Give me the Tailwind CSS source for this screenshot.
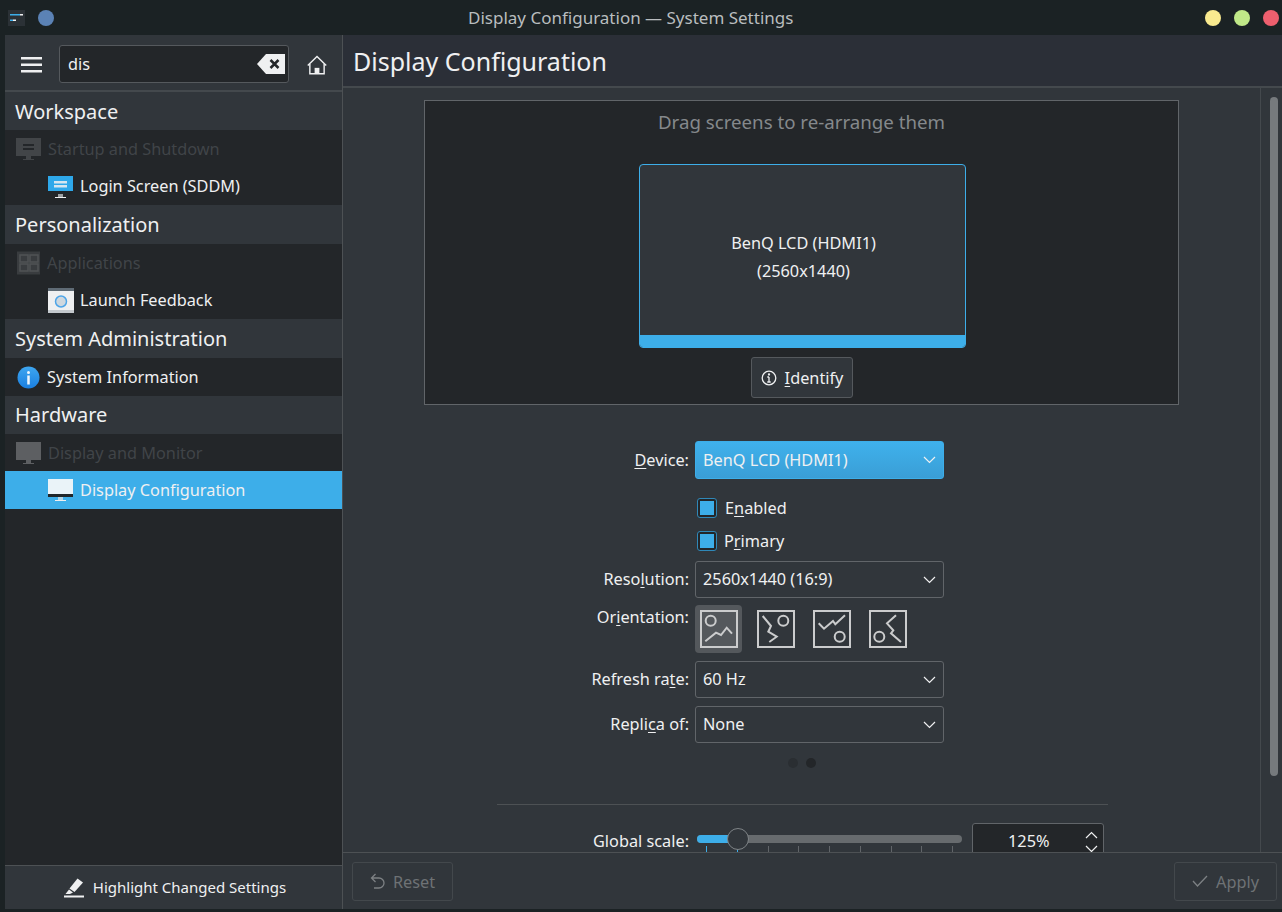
<!DOCTYPE html>
<html lang="en">
<head>
    <meta charset="UTF-8">
    <title>Display Configuration — System Settings</title>
    <script src="https://cdn.jsdelivr.net/npm/@tailwindcss/browser@4"></script>
</head>
<body class="bg-[#1b2224]">
    <div class="w-[1282px] h-[912px] overflow-hidden flex flex-col font-['Noto_Sans',sans-serif] text-[16.3px] text-[#eff0f1]">

        <!-- title bar -->
        <div class="h-[35px] shrink-0 flex items-center bg-[#1b2224]">
            <div class="w-[468px] shrink-0 flex items-center pl-[8px]">
                <svg width="17" height="16" viewBox="0 0 17 16">
                    <rect width="17" height="16" fill="#2b3136"/>
                    <rect x="2" y="4" width="10" height="1.5" fill="#3daee9"/>
                    <rect x="12" y="4" width="3" height="1.5" fill="#eff0f1"/>
                    <rect x="2" y="9.500" width="3" height="1.500" fill="#3daee9"/>
                    <rect x="5" y="9.500" width="3" height="1.500" fill="#eff0f1"/>
                </svg>
                <div class="w-[16px] h-[16px] ml-[13px] rounded-full bg-[#5b82b5]"></div>
            </div>
            <div class="text-[17px] text-[#b9bdbf] whitespace-nowrap">Display Configuration — System Settings</div>
            <div class="ml-auto flex items-center gap-[13px] pr-[3px]">
                <div class="w-[16px] h-[16px] rounded-full bg-[#f9ea8f]"></div>
                <div class="w-[16px] h-[16px] rounded-full bg-[#c0e888]"></div>
                <div class="w-[16px] h-[16px] rounded-full bg-[#ee5f6e]"></div>
            </div>
        </div>

        <div class="flex-1 flex ml-[5px] mb-[3px] min-h-0">

            <!-- sidebar -->
            <div class="w-[338px] shrink-0 flex flex-col border-r border-[#4d5154] bg-[#232629]">
                <div class="h-[57px] shrink-0 flex items-center bg-[#31363b] border-b-2 border-[#44494d]">
                    <svg class="ml-[16px] mt-[4px]" width="21" height="16" viewBox="0 0 21 16" fill="#eff0f1">
                        <rect y="0" width="21" height="2.500"/>
                        <rect y="6.500" width="21" height="2.500"/>
                        <rect y="13" width="21" height="2.500"/>
                    </svg>
                    <div class="ml-[17px] mt-[3px] w-[230px] h-[38px] flex items-center justify-between pl-[8px] pr-[3px] bg-[#232629] border border-[#55595d] rounded-[3px]">
                        <span class="pt-[1px]">dis</span>
                        <svg width="28" height="20" viewBox="0 0 28 20">
                            <path d="M0 10 L9 0 H28 V20 H9 Z" fill="#eff0f1"/>
                            <path d="M13.500 6 L21.500 14 M21.500 6 L13.500 14" stroke="#232629" stroke-width="2.500"/>
                        </svg>
                    </div>
                    <svg class="ml-[18px] mt-[4px]" width="20" height="20" viewBox="0 0 21 20" fill="none" stroke="#eff0f1" stroke-width="1.500">
                        <path d="M0.800 10.500 L10.500 1 L20.200 10.500"/>
                        <path d="M3 9 V19.200 H18 V9"/>
                        <rect x="8" y="13" width="5" height="6" fill="#eff0f1" stroke="none"/>
                    </svg>
                </div>

                <div class="h-[38px] shrink-0 flex items-center pl-[10px] pt-[1px] bg-[#31363b] text-[20px]">Workspace</div>
                <div class="h-[38px] flex items-center pl-[10px]">
                    <svg width="27" height="24" viewBox="0 0 27 24" class="opacity-30">
                        <rect x="1" y="1" width="25" height="18" fill="#8a8d90"/>
                        <rect x="8" y="7" width="11" height="2" fill="#232629"/>
                        <rect x="8" y="11" width="11" height="2" fill="#232629"/>
                        <rect x="11" y="19" width="5" height="3" fill="#8a8d90"/>
                        <rect x="8" y="22" width="11" height="1" fill="#8a8d90"/>
                    </svg>
                    <span class="ml-[6px] text-[#404448]">Startup and Shutdown</span>
                </div>
                <div class="h-[37px] flex items-center pl-[42px]">
                    <svg width="27" height="24" viewBox="0 0 27 24">
                        <rect x="1" y="1" width="25" height="18" fill="#2ea8ea"/>
                        <rect x="1" y="16" width="25" height="3" fill="#20262a"/>
                        <rect x="7" y="6" width="13" height="2.500" fill="#d5e6f0"/>
                        <rect x="7" y="10" width="13" height="2.500" fill="#d5e6f0"/>
                        <rect x="11" y="19" width="5" height="3" fill="#9da1a4"/>
                        <rect x="8" y="22" width="11" height="1" fill="#eff0f1"/>
                    </svg>
                    <span class="ml-[6px] pb-[1px]">Login Screen (SDDM)</span>
                </div>

                <div class="h-[39px] shrink-0 flex items-center pl-[10px] pt-[1px] bg-[#31363b] text-[20px]">Personalization</div>
                <div class="h-[38px] flex items-center pl-[11px]">
                    <svg width="25" height="24" viewBox="0 0 25 24" fill="none" stroke="#505356" stroke-width="1.500">
                        <rect x="1" y="0.500" width="23" height="23" fill="#393c3f" stroke="none"/>
                        <rect x="4" y="4" width="8" height="7"/>
                        <rect x="14" y="4" width="8" height="7"/>
                        <rect x="4" y="13" width="8" height="7"/>
                        <rect x="14" y="13" width="8" height="7"/>
                    </svg>
                    <span class="ml-[6px] text-[#404448]">Applications</span>
                </div>
                <div class="h-[37px] flex items-center pl-[42px]">
                    <svg width="27" height="25" viewBox="0 0 27 25">
                        <rect x="1" y="0" width="26" height="25" fill="#eff0f1"/>
                        <rect x="1" y="0" width="26" height="3" fill="#5f6b75"/>
                        <rect x="1" y="22" width="26" height="3" fill="#c4c9cd"/>
                        <circle cx="14" cy="13.500" r="5.500" fill="#cfd8df" stroke="#4ea5e8" stroke-width="1.500"/>
                    </svg>
                    <span class="ml-[6px] pb-[1px]">Launch Feedback</span>
                </div>

                <div class="h-[39px] shrink-0 flex items-center pl-[10px] pt-[1px] bg-[#31363b] text-[20px]">System Administration</div>
                <div class="h-[38px] flex items-center pl-[12px]">
                    <svg width="23" height="23" viewBox="0 0 23 23">
                        <defs>
                            <linearGradient id="infoBlue" x1="0" y1="0" x2="0" y2="1">
                                <stop offset="0" stop-color="#3ea6f0"/>
                                <stop offset="1" stop-color="#1a7fe0"/>
                            </linearGradient>
                        </defs>
                        <circle cx="11.500" cy="11.500" r="11" fill="url(#infoBlue)"/>
                        <rect x="10.250" y="9.500" width="2.500" height="9" fill="#eff6fc"/>
                        <circle cx="11.500" cy="6.500" r="1.500" fill="#eff6fc"/>
                    </svg>
                    <span class="ml-[7px]">System Information</span>
                </div>

                <div class="h-[38px] shrink-0 flex items-center pl-[10px] bg-[#31363b] text-[20px]">Hardware</div>
                <div class="h-[37px] flex items-center pl-[10px]">
                    <svg width="27" height="24" viewBox="0 0 27 24" class="opacity-40">
                        <rect x="1" y="1" width="25" height="18" fill="#b4b6b8"/>
                        <rect x="11" y="19" width="5" height="3" fill="#b4b6b8"/>
                        <rect x="8" y="22" width="11" height="1" fill="#b4b6b8"/>
                    </svg>
                    <span class="ml-[6px] pt-[1px] text-[#404448]">Display and Monitor</span>
                </div>
                <div class="h-[38px] flex items-center pl-[42px] bg-[#3daee9]">
                    <svg width="27" height="24" viewBox="0 0 27 24">
                        <rect x="1" y="1" width="25" height="18" fill="#eaf3f8"/>
                        <rect x="1" y="16" width="25" height="3" fill="#20262a"/>
                        <rect x="11" y="19" width="5" height="3" fill="#b5d6e8"/>
                        <rect x="8" y="22" width="11" height="1" fill="#eff0f1"/>
                    </svg>
                    <span class="ml-[6px]">Display Configuration</span>
                </div>

                <div class="flex-1"></div>
                <div class="h-[44px] shrink-0 flex items-center justify-center pl-[3px] bg-[#31363b] border-t border-[#4d5154] text-[15px]">
                    <svg width="20" height="20" viewBox="0 0 20 20" fill="#eff0f1">
                        <path d="M13.500 0.500 L19 4.500 L10.500 14 L5.500 10.500 Z"/>
                        <path d="M5 11.500 L9 14.500 L6 16 L1.500 16 Z"/>
                        <rect y="17.500" width="20" height="2"/>
                    </svg>
                    <span class="ml-[9px]">Highlight Changed Settings</span>
                </div>
            </div>

            <!-- main panel -->
            <div class="flex-1 min-w-0 flex flex-col bg-[#31363b]">
                <div class="h-[53px] shrink-0 flex items-center pl-[10px] pt-[2px] bg-[#2b2f37] border-b-2 border-[#44494d] text-[25px]">Display Configuration</div>

                <div class="flex-1 min-h-0 flex">
                    <div class="w-[917px] shrink-0 overflow-hidden">
                        <div class="mt-[12px] ml-[81px] w-[755px] h-[305px] flex flex-col items-center bg-[#232629] border border-[#616569]">
                            <div class="mt-[8px] h-[26px] leading-[26px] text-[18.7px] text-[#85898c]">Drag screens to re-arrange them</div>
                            <div class="mt-[29px] ml-[2px] w-[327px] h-[184px] flex flex-col rounded-[4px] border border-[#3daee9] bg-[#31363b] overflow-hidden">
                                <div class="flex-1 flex flex-col items-center justify-center leading-[28px] pt-[13px] pl-[2px]">
                                    <div>BenQ LCD (HDMI1)</div>
                                    <div>(2560x1440)</div>
                                </div>
                                <div class="h-[12px] bg-[#3daee9]"></div>
                            </div>
                            <div class="mt-[9px] ml-[1px] w-[102px] h-[41px] flex items-center justify-center bg-[#31363b] border border-[#55595d] rounded-[3px]">
                                <svg width="16" height="16" viewBox="0 0 16 16" fill="none" stroke="#eff0f1" stroke-width="1.300">
                                    <circle cx="8" cy="8" r="6.800"/>
                                    <path d="M8 7 V12 M6.300 7 H8 M6.300 12 H9.700"/>
                                    <circle cx="8" cy="4.500" r="0.500" fill="#eff0f1"/>
                                </svg>
                                <span class="ml-[8px] pt-[2px]"><u class="underline-offset-2">I</u>dentify</span>
                            </div>
                        </div>

                        <div class="mt-[36px] h-[38px] flex items-center">
                            <div class="w-[346px] text-right"><u class="underline-offset-2">D</u>evice:</div>
                            <div class="ml-[6px] w-[249px] h-[38px] flex items-center justify-between pl-[7px] pr-[7px] rounded-[3px] border border-[#3daee9] bg-gradient-to-b from-[#3fb1ec] to-[#3a9ed6]">
                                <span>BenQ LCD (HDMI1)</span>
                                <svg width="13" height="8" viewBox="0 0 13 8" fill="none" stroke="#eff0f1" stroke-width="1.200"><path d="M1 1 L6.500 6.500 L12 1"/></svg>
                            </div>
                        </div>

                        <div class="mt-[19px] h-[20px] flex items-center pl-[353.500px]">
                            <div class="w-[20px] h-[20px] flex items-center justify-center rounded-[3px] border border-[#2f88b8] bg-[#232629]"><div class="w-[14px] h-[14px] bg-[#3daee9]"></div></div>
                            <span class="ml-[8.500px]">E<u class="underline-offset-2">n</u>abled</span>
                        </div>
                        <div class="mt-[13px] h-[20px] flex items-center pl-[353.500px]">
                            <div class="w-[20px] h-[20px] flex items-center justify-center rounded-[3px] border border-[#2f88b8] bg-[#232629]"><div class="w-[14px] h-[14px] bg-[#3daee9]"></div></div>
                            <span class="ml-[7.500px]">P<u class="underline-offset-2">r</u>imary</span>
                        </div>

                        <div class="mt-[10px] h-[37px] flex items-center">
                            <div class="w-[346px] text-right pb-[1px]">Reso<u class="underline-offset-2">l</u>ution:</div>
                            <div class="ml-[6px] w-[249px] h-[37px] flex items-center justify-between pl-[7px] pr-[7px] rounded-[3px] border border-[#616569]">
                                <span class="pb-[1px]">2560x1440 (16:9)</span>
                                <svg width="13" height="8" viewBox="0 0 13 8" fill="none" stroke="#eff0f1" stroke-width="1.200"><path d="M1 1 L6.500 6.500 L12 1"/></svg>
                            </div>
                        </div>

                        <div class="mt-[7px] h-[48px] flex items-start">
                            <div class="w-[346px] text-right leading-[24px]">Or<u class="underline-offset-2">i</u>entation:</div>
                            <div class="ml-[6px] w-[47px] h-[48px] flex items-center justify-center pl-[1px] rounded-[4px] bg-[#54585c]">
                                <svg width="38" height="38" viewBox="0 0 38 38" fill="none" stroke="#cbcccd" stroke-width="2">
                                    <rect x="1" y="1" width="36" height="36"/>
                                    <circle cx="10.700" cy="10.700" r="5"/>
                                    <path d="M5.300 31.300 L16 22.700 L21 25 L26.700 17.700 L32 23.700"/>
                                </svg>
                            </div>
                            <div class="ml-[15px] flex gap-[18px] pt-[5px]">
                                <svg width="38" height="38" viewBox="0 0 38 38" fill="none" stroke="#cbcccd" stroke-width="2">
                                    <rect x="1" y="1" width="36" height="36"/>
                                    <circle cx="26.300" cy="10.700" r="5"/>
                                    <path d="M5.700 6 L14 16 L11.300 21.700 L19.700 26.700 L12.300 32"/>
                                </svg>
                                <svg width="38" height="38" viewBox="0 0 38 38" fill="none" stroke="#cbcccd" stroke-width="2">
                                    <rect x="1" y="1" width="36" height="36"/>
                                    <circle cx="26.700" cy="26.700" r="5"/>
                                    <path d="M5.700 13.300 L11 18.700 L20 11 L22.300 14.300 L32 5.300"/>
                                </svg>
                                <svg width="38" height="38" viewBox="0 0 38 38" fill="none" stroke="#cbcccd" stroke-width="2">
                                    <rect x="1" y="1" width="36" height="36"/>
                                    <circle cx="10.300" cy="26.700" r="5"/>
                                    <path d="M27 5.300 L18 13.300 L24.300 20.300 L22 23.300 L32 32"/>
                                </svg>
                            </div>
                        </div>

                        <div class="mt-[8px] h-[37px] flex items-center">
                            <div class="w-[346px] text-right pb-[1px]">Refresh ra<u class="underline-offset-2">t</u>e:</div>
                            <div class="ml-[6px] w-[249px] h-[37px] flex items-center justify-between pl-[7px] pr-[7px] rounded-[3px] border border-[#616569]">
                                <span class="pb-[1px]">60 Hz</span>
                                <svg width="13" height="8" viewBox="0 0 13 8" fill="none" stroke="#eff0f1" stroke-width="1.200"><path d="M1 1 L6.500 6.500 L12 1"/></svg>
                            </div>
                        </div>
                        <div class="mt-[8px] h-[37px] flex items-center">
                            <div class="w-[346px] text-right pb-[1px]">Repli<u class="underline-offset-2">c</u>a of:</div>
                            <div class="ml-[6px] w-[249px] h-[37px] flex items-center justify-between pl-[7px] pr-[7px] rounded-[3px] border border-[#616569]">
                                <span class="pb-[1px]">None</span>
                                <svg width="13" height="8" viewBox="0 0 13 8" fill="none" stroke="#eff0f1" stroke-width="1.200"><path d="M1 1 L6.500 6.500 L12 1"/></svg>
                            </div>
                        </div>

                        <div class="mt-[15px] h-[10px] flex pl-[445px] gap-[8px]">
                            <div class="w-[10px] h-[10px] rounded-full bg-[#2a2e32]"></div>
                            <div class="w-[10px] h-[10px] rounded-full bg-[#232629]"></div>
                        </div>

                        <div class="mt-[36px] ml-[154px] w-[611px] h-[1px] bg-[#4d5154]"></div>

                        <div class="mt-[18px] flex items-start">
                            <div class="w-[346px] text-right leading-[36px]">Global scale:</div>
                            <div class="ml-[8px] w-[265px] pt-[12px]">
                                <div class="relative h-[8px] rounded-full bg-[#676b6e]">
                                    <div class="w-[42px] h-[8px] rounded-l-full bg-[#3daee9]"></div>
                                    <div class="absolute left-[30px] top-[-7px] w-[22px] h-[22px] rounded-full bg-[#31363b] border border-[#7f8487]"></div>
                                </div>
                                <div class="mt-[3px] flex justify-between pl-[9px] pr-[9px]">
                                    <div class="w-[1px] h-[8px] bg-[#3daee9]"></div>
                                    <div class="w-[1px] h-[8px] bg-[#3daee9]"></div>
                                    <div class="w-[1px] h-[8px] bg-[#616569]"></div>
                                    <div class="w-[1px] h-[8px] bg-[#616569]"></div>
                                    <div class="w-[1px] h-[8px] bg-[#616569]"></div>
                                    <div class="w-[1px] h-[8px] bg-[#616569]"></div>
                                    <div class="w-[1px] h-[8px] bg-[#616569]"></div>
                                    <div class="w-[1px] h-[8px] bg-[#616569]"></div>
                                    <div class="w-[1px] h-[8px] bg-[#616569]"></div>
                                </div>
                            </div>
                            <div class="ml-[10px] w-[132px] h-[37px] flex items-center justify-between pl-[35px] pr-[5px] bg-[#232629] border border-[#616569] rounded-[3px]">
                                <span>125%</span>
                                <div class="flex flex-col gap-[6px]">
                                    <svg width="13" height="8" viewBox="0 0 13 8" fill="none" stroke="#eff0f1" stroke-width="1.200"><path d="M1 7 L6.500 1.500 L12 7"/></svg>
                                    <svg width="13" height="8" viewBox="0 0 13 8" fill="none" stroke="#eff0f1" stroke-width="1.200"><path d="M1 1 L6.500 6.500 L12 1"/></svg>
                                </div>
                            </div>
                        </div>
                    </div>

                    <!-- scrollbar -->
                    <div class="flex-1 border-l border-[#44494d] pt-[9px] pl-[9px]">
                        <div class="w-[8px] h-[679px] rounded-full bg-[#767a7d]"></div>
                    </div>
                </div>

                <!-- footer buttons -->
                <div class="h-[57px] shrink-0 flex items-center justify-between pl-[9px] pr-[5px] border-t border-[#4d5154] text-[#6e7275]">
                    <div class="w-[101px] h-[39px] flex items-center justify-center gap-[8px] border border-[#43484c] rounded-[3px]">
                        <svg width="15" height="16" viewBox="0 0 15 16" fill="none" stroke="#7d8184" stroke-width="1.300"><path d="M5.500 1 L1.500 5 L5.500 9 M1.500 5 H9 A5 5 0 0 1 9 15 H4"/></svg>
                        <span class="pt-[2px]">Reset</span>
                    </div>
                    <div class="w-[103px] h-[39px] flex items-center justify-center gap-[8px] border border-[#43484c] rounded-[3px]">
                        <svg width="16" height="12" viewBox="0 0 16 12" fill="none" stroke="#7d8184" stroke-width="1.300"><path d="M1 6 L5.500 11 L15 1"/></svg>
                        <span class="pt-[2px]">Apply</span>
                    </div>
                </div>
            </div>
        </div>
    </div>
</body>
</html>
